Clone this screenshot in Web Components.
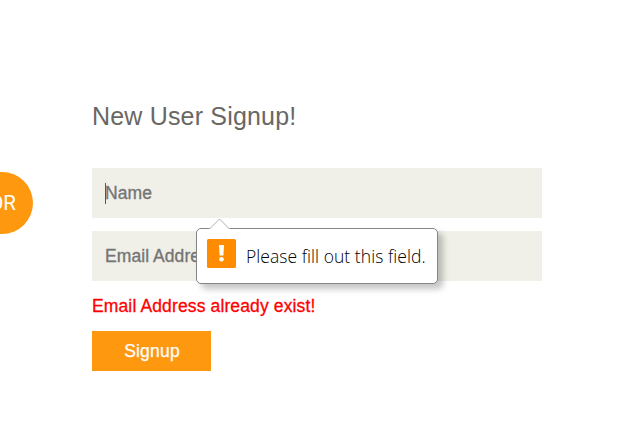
<!DOCTYPE html>
<html lang="en">
<head>
<meta charset="utf-8">
<title>Signup</title>
<style>
body{margin:0;background:#fff;font-family:"Liberation Sans",Arial,sans-serif;overflow:hidden}
</style>
</head>
<body>
<signup-page></signup-page>
<script>
const define = (name, html) => customElements.define(name, class extends HTMLElement {
  constructor() {
    super();
    this.attachShadow({ mode: 'open' }).innerHTML = html;
  }
});

define('or-badge', `<style>
:host{display:flex;box-sizing:border-box;width:62px;height:62px;margin-left:-29px;padding-left:1px;border-radius:50%;background:#fe980f;color:#fff;align-items:center;justify-content:center;font:20.5px/62px Roboto,sans-serif;flex:none}
</style><slot></slot>`);

define('form-field', `<style>
:host{display:flex;align-items:center;box-sizing:border-box;width:450px;height:50px;padding-left:13px;background:#f0f0e9;color:#757575;font-size:17.5px;line-height:20px;letter-spacing:.07px;-webkit-text-stroke:.35px #757575;white-space:nowrap}
i{display:none;width:1px;height:21px;margin-right:-1px;background:#555}
:host([focused]) i{display:block}
</style><i></i><slot></slot>`);

define('signup-button', `<style>
:host{display:flex;align-items:center;justify-content:center;width:119px;height:40px;padding-left:1px;box-sizing:border-box;background:#fe980f;color:#fff;font-size:17.5px;line-height:20px;letter-spacing:.2px;-webkit-text-stroke:.25px #fff}
</style><slot></slot>`);

define('validation-tip', `<style>
:host{display:flex;align-items:flex-start;box-sizing:border-box;width:242px;height:56px;padding:10px 0 0 10px;background:#fff;border:1px solid #858585;border-radius:5px;box-shadow:5px 5px 6px rgba(0,0,0,.23);color:#000;font:300 17.5px/24px "Open Sans","Noto Sans",sans-serif;white-space:nowrap}
.arrow{position:absolute;left:12px;top:-11px}
.icon{flex:none;margin-right:10px}
.text{margin-top:5px;letter-spacing:.05px}
</style>
<svg class="arrow" width="22" height="12" viewBox="0 0 22 12"><path d="M0 12V11L10.5 .8 21 11V12Z" fill="#fff"/><path d="M.5 11L10.5 1 20.5 11" fill="none" stroke="#b0b0b0"/></svg>
<svg class="icon" width="29" height="29" viewBox="0 0 29 29"><rect width="29" height="29" rx="1.5" fill="#ff8c00"/><path d="M12 6H17L16.4 16.5H12.6Z" fill="#fff"/><circle cx="14.5" cy="20.3" r="2.3" fill="#fff"/></svg>
<span class="text"><slot></slot></span>`);

define('signup-form', `<style>
:host{display:flex;flex-direction:column;position:relative;width:450px;padding-top:102px}
h2{margin:0 0 37px;font-weight:400;font-size:25px;line-height:29px;letter-spacing:.18px;color:#696763;white-space:nowrap}
form-field{margin-bottom:13px}
p{margin:2px 0 15px;font-size:17.5px;line-height:20px;letter-spacing:.13px;color:#f00;-webkit-text-stroke:.3px #f00;white-space:nowrap}
validation-tip{position:absolute;left:104px;top:228px}
</style>
<h2>New User Signup!</h2>
<form-field focused>Name</form-field>
<form-field>Email Address</form-field>
<p>Email Address already exist!</p>
<signup-button>Signup</signup-button>
<validation-tip>Please fill out this field.</validation-tip>`);

define('signup-page', `<style>
:host{display:flex;width:626px;height:447px;overflow:hidden;align-items:flex-start;gap:59px}
or-badge{margin-top:172px}
</style><or-badge>OR</or-badge><signup-form></signup-form>`);
</script>
</body>
</html>
